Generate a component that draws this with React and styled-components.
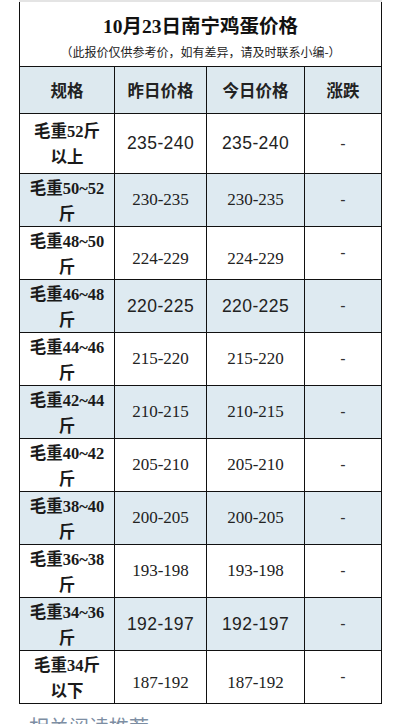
import styled, { createGlobalStyle } from "styled-components";

const rows = [
  { spec: ["毛重", "52", "斤"], tail: "以上", y: "235-240", t: "235-240", ySans: true, tSans: true, tall: true },
  { spec: ["毛重", "50~52"], tail: "斤", y: "230-235", t: "230-235" },
  { spec: ["毛重", "48~50"], tail: "斤", y: "224-229", t: "224-229", low: true },
  { spec: ["毛重", "46~48"], tail: "斤", y: "220-225", t: "220-225", ySans: true, tSans: true },
  { spec: ["毛重", "44~46"], tail: "斤", y: "215-220", t: "215-220" },
  { spec: ["毛重", "42~44"], tail: "斤", y: "210-215", t: "210-215" },
  { spec: ["毛重", "40~42"], tail: "斤", y: "205-210", t: "205-210" },
  { spec: ["毛重", "38~40"], tail: "斤", y: "200-205", t: "200-205" },
  { spec: ["毛重", "36~38"], tail: "斤", y: "193-198", t: "193-198" },
  { spec: ["毛重", "34~36"], tail: "斤", y: "192-197", t: "192-197", ySans: true, tSans: true },
  { spec: ["毛重", "34", "斤"], tail: "以下", y: "187-192", t: "187-192", low: true },
];

const widths = [95, 92, 98, 77];

const App = () => {
  return (
    <Page>
      <GlobalStyle />
      <Table>
        <colgroup>
          {widths.map((w, i) => (
            <Col key={i} $w={w} />
          ))}
        </colgroup>
        <tbody>
          <tr>
            <TitleCell colSpan={4}>
              <Title>
                <Num>10</Num>月<Num>23</Num>日南宁鸡蛋价格
              </Title>
              <Note>（此报价仅供参考价，如有差异，请及时联系小编-）</Note>
            </TitleCell>
          </tr>
          <HeadRow>
            <HeadCell>规格</HeadCell>
            <HeadCell>昨日价格</HeadCell>
            <HeadCell>今日价格</HeadCell>
            <HeadCell>涨跌</HeadCell>
          </HeadRow>
          {rows.map((r, i) => (
            <Row key={i} $shade={i % 2 === 1} $tall={r.tall}>
              <SpecCell>
                {r.spec[0]}
                <Num>{r.spec[1]}</Num>
                {r.spec[2]}
                <br />
                {r.tail}
              </SpecCell>
              <PriceCell $sans={r.ySans} $low={r.low}>{r.y}</PriceCell>
              <PriceCell $sans={r.tSans} $low={r.low}>{r.t}</PriceCell>
              <TrendCell>-</TrendCell>
            </Row>
          ))}
        </tbody>
      </Table>
      <Footer>相关阅读推荐</Footer>
    </Page>
  );
};

const GlobalStyle = createGlobalStyle`
  body {
    margin: 0;
    background: #fff;
    font-family: "Noto Sans CJK SC", "Liberation Sans", sans-serif;
    color: #1a1a1a;
  }
`;

const Page = styled.div`
  width: 400px;
  height: 724px;
  overflow: hidden;
  padding: 0 19px;
  box-sizing: border-box;
`;

const Table = styled.table`
  width: 362px;
  border-collapse: collapse;
  table-layout: fixed;
`;

const Col = styled.col`
  width: ${(p) => p.$w}px;
`;

const TitleCell = styled.td`
  height: 64px;
  padding: 0;
  border-left: 1px solid #111;
  border-right: 1px solid #111;
  border-top: 2px solid #e4e4e4;
  border-bottom: 1px solid #111;
  text-align: center;
  vertical-align: top;
`;

const Title = styled.div`
  margin-top: 9px;
  font-size: 19.5px;
  font-weight: 700;
  line-height: 28px;
  color: #111;
`;

const Num = styled.span`
  font-family: "Liberation Serif", serif;
  font-weight: 700;
`;

const Note = styled.div`
  margin-top: 2px;
  font-size: 12px;
  line-height: 18px;
  color: #222;
`;

const HeadRow = styled.tr`
  height: 47px;
  background: #dde9ef;
`;

const HeadCell = styled.td`
  padding: 0;
  border: 1px solid #111;
  text-align: center;
  font-size: 16.5px;
  font-weight: 700;
  color: #222;
`;

const Row = styled.tr`
  height: ${(p) => (p.$tall ? 60 : 53)}px;
  background: ${(p) => (p.$shade ? "#deeaf1" : "#fff")};
`;

const SpecCell = styled.td`
  padding: 0;
  border: 1px solid #111;
  text-align: center;
  font-size: 16.5px;
  font-weight: 700;
  line-height: 25px;
  color: #1a1a1a;
`;

const PriceCell = styled.td`
  padding: ${(p) => (p.$low ? "12px 0 0" : "0")};
  border: 1px solid #111;
  text-align: center;
  font-family: ${(p) => (p.$sans ? '"Liberation Sans", sans-serif' : '"Liberation Serif", serif')};
  font-size: ${(p) => (p.$sans ? "17.5px" : "17px")};
  letter-spacing: ${(p) => (p.$sans ? "0.4px" : "0")};
  color: #222;
`;

const TrendCell = styled.td`
  padding: 0;
  border: 1px solid #111;
  text-align: center;
  font-family: "Liberation Sans", sans-serif;
  font-size: 16px;
  color: #333;
`;

const Footer = styled.div`
  margin-top: 11px;
  padding-left: 10px;
  font-size: 20px;
  line-height: 24px;
  color: #7d8ea3;
`;

export default App;
